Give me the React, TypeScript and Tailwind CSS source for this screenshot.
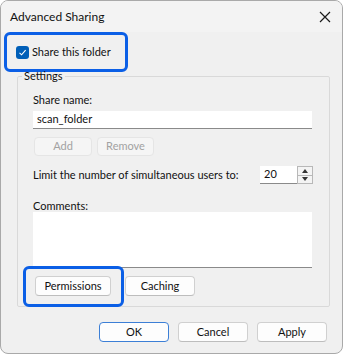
import React from 'react';

const font = { fontFamily: 'Lato, "Noto Sans", "Liberation Sans", sans-serif' };

function Btn({ label, disabled, primary, className = '' }: { label: string; disabled?: boolean; primary?: boolean; className?: string }) {
  return (
    <div
      className={`flex items-center justify-center rounded-[4px] border text-[11px] ${
        disabled
          ? 'bg-[#f5f5f5] border-[#e5e5e5] text-[#a2a2a2]'
          : primary
          ? 'bg-[#fdfdfd] border-[#3c7fd6] border-[1.5px] text-[#111]'
          : 'bg-[#fdfdfd] border-[#d0d0d0] border-b-[#bdbdbd] text-[#111]'
      } ${className}`}
    >
      {label}
    </div>
  );
}

export default function App(): JSX.Element {
  return (
    <div className="w-[345px] h-[356px] bg-white" style={font}>
      <div className="w-[343px] h-[354px] rounded-[8px] border border-[#a9a9a9] bg-[#f0f0f0] overflow-hidden flex flex-col">
        {/* Title bar */}
        <div className="h-[31px] bg-[#f3f3f3] flex items-center justify-between pl-[9px] pr-[8px] shrink-0">
          <span className="text-[12px] text-[#111] mt-[1px]">Advanced Sharing</span>
          <svg width="12" height="12" viewBox="0 0 12 12" className="mr-[3px]">
            <path d="M1 1 L11 11 M11 1 L1 11" stroke="#1a1a1a" strokeWidth="1.2" />
          </svg>
        </div>

        {/* Share this folder (highlighted) */}
        <div className="ml-[3px] w-[124px] h-[40px] border-[3px] border-[#0b5fe6] rounded-[6px] flex items-center pl-[9px]">
          <div className="w-[13px] h-[13px] rounded-[3px] bg-[#005fb8] flex items-center justify-center">
            <svg width="9" height="9" viewBox="0 0 9 9">
              <path d="M1.5 4.8 L3.6 6.8 L7.6 2.2" stroke="white" strokeWidth="1.1" fill="none" />
            </svg>
          </div>
          <span className="ml-[3px] text-[11px] text-[#111]">Share this folder</span>
        </div>

        {/* Settings group */}
        <fieldset className="ml-[16px] mt-[-2px] w-[313px] h-[237px] border border-[#d9d9d9] rounded-[2px] px-[15px] pb-0 pt-0">
          <legend className="ml-[-11px] px-[2px] text-[11px] text-[#111] leading-[12px]">Settings</legend>

          <div className="mt-[10px] text-[11px] leading-[16px] text-[#111]">Share name:</div>
          <div className="mt-[3px] w-[279px] h-[18px] bg-white border-b border-b-[#8a8a8a] flex items-center pl-[4px] text-[11px] text-[#111]">
            scan_folder
          </div>

          <div className="mt-[8px] flex gap-[5px]">
            <Btn label="Add" disabled className="w-[58px] h-[19px] ml-[1px]" />
            <Btn label="Remove" disabled className="w-[57px] h-[19px]" />
          </div>

          <div className="mt-[10px] flex items-center justify-between w-[280px]">
            <span className="text-[11px] text-[#111] whitespace-nowrap">Limit the number of simultaneous users to:</span>
            <div className="flex h-[18px]">
              <div className="w-[37px] h-[18px] bg-white border-b border-b-[#8a8a8a] flex items-center pl-[4px] text-[11px] text-[#111]">20</div>
              <div className="w-[16px] h-[18px] border border-[#b8b8b8] bg-[#f4f4f4] flex flex-col">
                <div className="flex-1 flex items-center justify-center border-b border-[#b8b8b8]">
                  <svg width="6" height="4" viewBox="0 0 6 4"><path d="M0 4 L3 0 L6 4 Z" fill="#333" /></svg>
                </div>
                <div className="flex-1 flex items-center justify-center">
                  <svg width="6" height="4" viewBox="0 0 6 4"><path d="M0 0 L3 4 L6 0 Z" fill="#333" /></svg>
                </div>
              </div>
            </div>
          </div>

          <div className="mt-[14px] text-[11px] leading-[16px] text-[#111]">Comments:</div>
          <div className="mt-[-2px] w-[279px] h-[56px] bg-white border-b border-b-[#8a8a8a]" />

          <div className="flex items-start mt-[-2px] ml-[-10px]">
            <div className="relative w-[101px] h-[41px] border-[3px] border-[#0b5fe6] rounded-[6px] pl-[9px] pt-[7px]">
              <Btn label="Permissions" className="w-[76px] h-[20px]" />
            </div>
            <Btn label="Caching" className="ml-[1px] mt-[10px] w-[70px] h-[20px]" />
          </div>
        </fieldset>

        {/* Dialog buttons */}
        <div className="mt-[15px] flex justify-end gap-[9px] pr-[15px]">
          <Btn label="OK" primary className="w-[70px] h-[20px]" />
          <Btn label="Cancel" className="w-[70px] h-[20px]" />
          <Btn label="Apply" className="w-[70px] h-[20px]" />
        </div>
      </div>
    </div>
  );
}
